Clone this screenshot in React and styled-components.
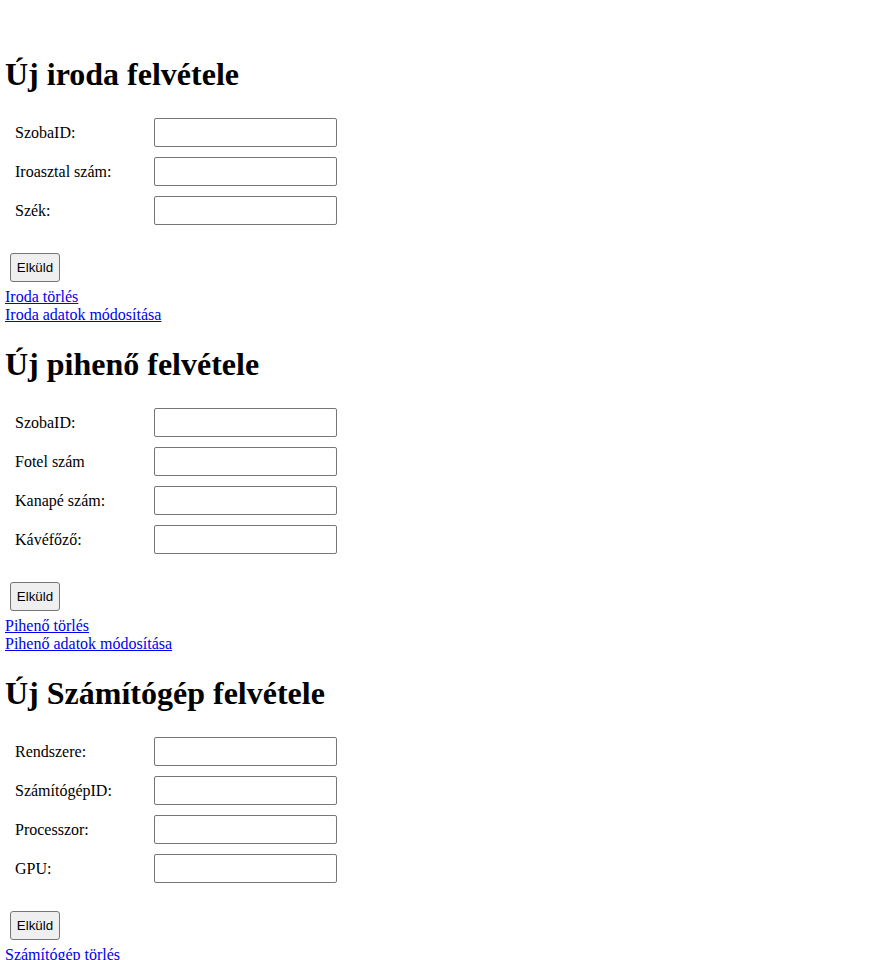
import React from 'react'
import styled, { createGlobalStyle } from 'styled-components';

const GlobalStyle = createGlobalStyle`
    body {
        margin: 0;
        background: #fff;
        font-family: "Liberation Serif", "Times New Roman", serif;
        font-size: 16px;
        color: #000;
    }
`;

const sections = [
    {
        title: "Új iroda felvétele",
        fields: ["SzobaID:", "Iroasztal szám:", "Szék:"],
        links: ["Iroda törlés", "Iroda adatok módosítása"],
    },
    {
        title: "Új pihenő felvétele",
        fields: ["SzobaID:", "Fotel szám", "Kanapé szám:", "Kávéfőző:"],
        links: ["Pihenő törlés", "Pihenő adatok módosítása"],
    },
    {
        title: "Új Számítógép felvétele",
        fields: ["Rendszere:", "SzámítógépID:", "Processzor:", "GPU:"],
        links: ["Számítógép törlés", "Számítógép adatok módosítása"],
    },
];

function App() {
  return (
    <Page>
        <GlobalStyle />
        {sections.map((section) => (
            <Section key={section.title}>
                <Title>{section.title}</Title>
                <Form onSubmit={(e) => e.preventDefault()}>
                    {section.fields.map((field) => (
                        <Row key={field}>
                            <Label>{field}</Label>
                            <Input type="text" />
                        </Row>
                    ))}
                    <SubmitBtn type="submit">Elküld</SubmitBtn>
                </Form>
                {section.links.map((link) => (
                    <NavLink key={link} href="#">{link}</NavLink>
                ))}
            </Section>
        ))}
    </Page>
  )
}

const Page = styled.div`
    padding: 34px 5px 20px;
`;
const Section = styled.section`
    display: block;
`;
const Title = styled.h1`
    font-size: 32px;
    font-weight: 700;
    margin: 21.5px 0;
    line-height: 37px;
`;
const Form = styled.form`
    padding: 4px 0 0 10px;
    margin: 0;
`;
const Row = styled.div`
    display: grid;
    grid-template-columns: 139px 183px;
    align-items: center;
    height: 29px;
    margin-bottom: 10px;
`;
const Label = styled.label`
    line-height: 18px;
`;
const Input = styled.input`
    box-sizing: border-box;
    width: 183px;
    height: 29px;
    border: 1px solid #767676;
    border-radius: 2px;
    padding: 4px 6px;
    font-size: 13px;
`;
const SubmitBtn = styled.button`
    display: block;
    box-sizing: border-box;
    margin: 28px 0 6px -5px;
    width: 50px;
    height: 29px;
    padding: 0;
    font-family: "Liberation Sans", Arial, sans-serif;
    font-size: 13.33px;
    color: #000;
    background: #efefef;
    border: 1px solid #767676;
    border-radius: 3px;
`;
const NavLink = styled.a`
    display: block;
    color: #0000ee;
    text-decoration: underline;
    line-height: 18px;
`;

export default App
